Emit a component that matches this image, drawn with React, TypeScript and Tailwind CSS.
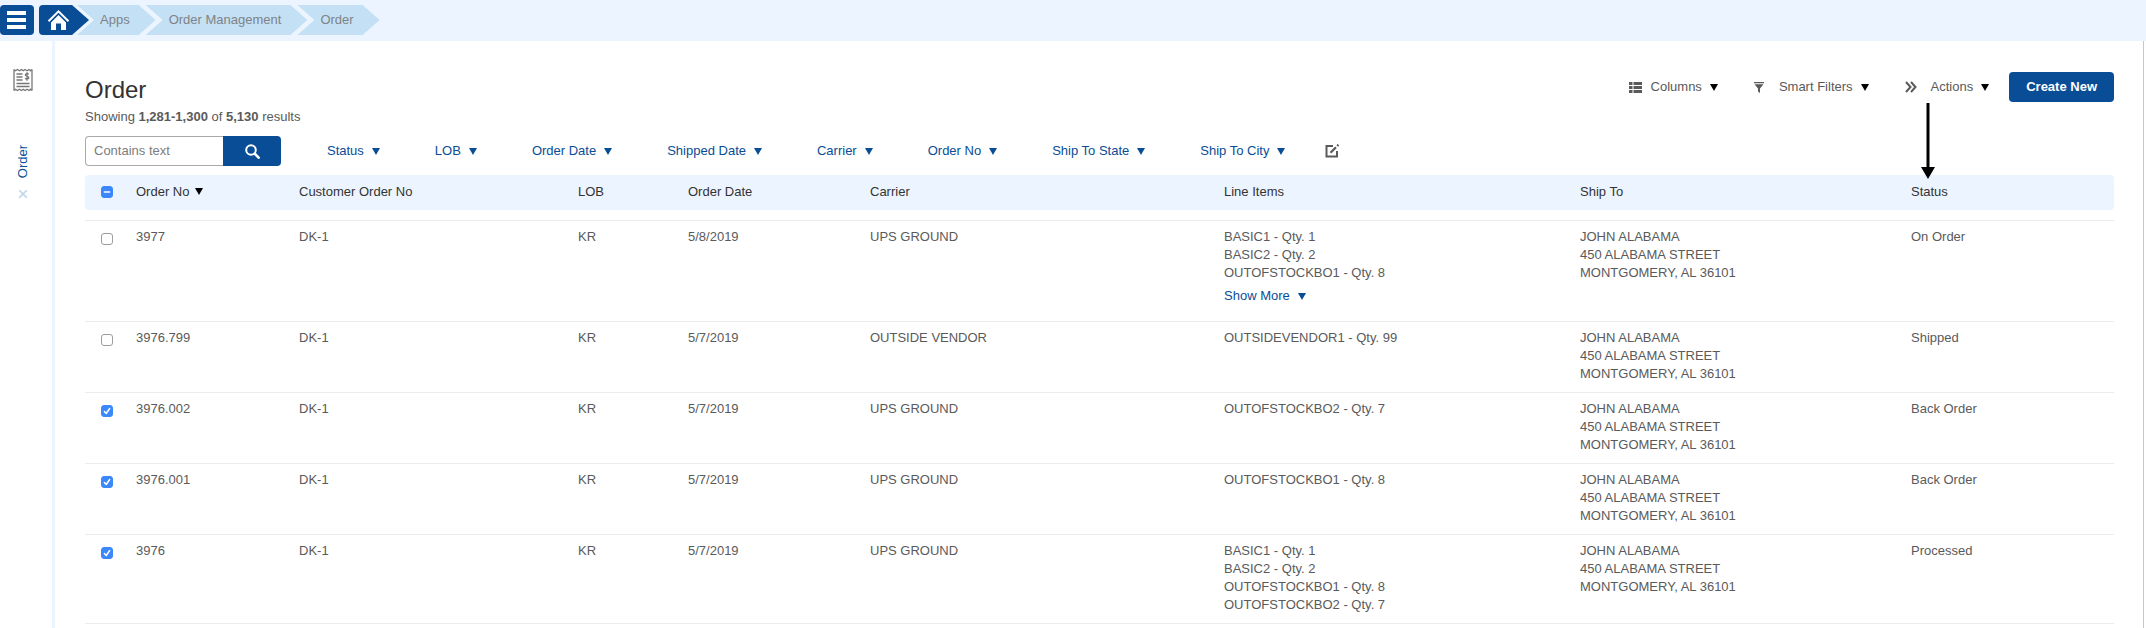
import { useState } from 'react';

const FILTERS = ['Status', 'LOB', 'Order Date', 'Shipped Date', 'Carrier', 'Order No', 'Ship To State', 'Ship To City'];

const ADDRESS = ['JOHN ALABAMA', '450 ALABAMA STREET', 'MONTGOMERY, AL 36101'];

const ORDERS = [
  { no: '3977', date: '5/8/2019', carrier: 'UPS GROUND', items: ['BASIC1 - Qty. 1', 'BASIC2 - Qty. 2', 'OUTOFSTOCKBO1 - Qty. 8'], more: true, status: 'On Order' },
  { no: '3976.799', date: '5/7/2019', carrier: 'OUTSIDE VENDOR', items: ['OUTSIDEVENDOR1 - Qty. 99'], more: false, status: 'Shipped' },
  { no: '3976.002', date: '5/7/2019', carrier: 'UPS GROUND', items: ['OUTOFSTOCKBO2 - Qty. 7'], more: false, status: 'Back Order' },
  { no: '3976.001', date: '5/7/2019', carrier: 'UPS GROUND', items: ['OUTOFSTOCKBO1 - Qty. 8'], more: false, status: 'Back Order' },
  { no: '3976', date: '5/7/2019', carrier: 'UPS GROUND', items: ['BASIC1 - Qty. 1', 'BASIC2 - Qty. 2', 'OUTOFSTOCKBO1 - Qty. 8', 'OUTOFSTOCKBO2 - Qty. 7'], more: false, status: 'Processed' },
];

function Caret() {
  return (
    <svg viewBox="0 0 8 7" className="w-2 h-[7px] shrink-0" fill="currentColor" aria-hidden="true">
      <path d="M0 0h8L4 7z" />
    </svg>
  );
}

function Crumb({ label }: { label: string }) {
  return (
    <a
      href="#"
      className="flex items-center h-[30px] pl-[23px] pr-[26px] bg-[#c4e0f4] [clip-path:polygon(0_0,calc(100%_-_17px)_0,100%_50%,calc(100%_-_17px)_100%,0_100%,17px_50%)]"
    >
      {label}
    </a>
  );
}

function Checkbox({ label, checked, mixed, onChange }: { label: string; checked: boolean; mixed?: boolean; onChange: () => void }) {
  return (
    <span className="relative block w-3 h-3">
      <input
        type="checkbox"
        aria-label={label}
        checked={checked}
        onChange={onChange}
        className="block appearance-none w-3 h-3 rounded-[3px] border border-[#9d9d9d] bg-white checked:border-[#3b87fc] checked:bg-[#3b87fc]"
      />
      {checked && (
        <svg viewBox="0 0 12 12" className="absolute inset-0 w-3 h-3 pointer-events-none" fill="none" stroke="#fff" strokeWidth="1.6" strokeLinecap="round" strokeLinejoin="round">
          <path d={mixed ? 'M3.4 6h5.2' : 'M3.4 6.5l1.8 2L8.6 3.6'} />
        </svg>
      )}
    </span>
  );
}

export default function App() {
  const [selected, setSelected] = useState<string[]>(['3976.002', '3976.001', '3976']);

  const toggle = (no: string) =>
    setSelected(selected.includes(no) ? selected.filter(n => n !== no) : [...selected, no]);

  const toggleAll = () => setSelected(selected.length ? [] : ORDERS.map(o => o.no));

  return (
    <div className="flex flex-col min-h-screen bg-white text-[13px] leading-[18px] text-[#5a5a5a] font-['Liberation_Sans',Arial,sans-serif]">
      <header className="flex items-center h-[41px] pb-px bg-[#ecf5ff]">
        <button aria-label="Menu" className="flex items-center justify-center w-[34px] h-[30px] rounded bg-[#084d96] text-white">
          <svg viewBox="0 0 20 18" className="w-5 h-[18px]" fill="currentColor">
            <path d="M0 0h19v4H0zM0 7h19v4H0zM0 14h19v4H0z" />
          </svg>
        </button>
        <nav aria-label="Breadcrumb" className="flex ml-[5px] text-[#7f8387]">
          <a href="#" aria-label="Home" className="block w-[50px] h-[30px]">
            <svg viewBox="0 0 50 30" className="w-[50px] h-[30px]">
              <path d="M4 0h29l17 15-17 15H4a4 4 0 0 1-4-4V4a4 4 0 0 1 4-4z" fill="#084d96" />
              <path d="M9.5 16.2L19.5 6.3l10 9.9" fill="none" stroke="#fff" strokeWidth="2" />
              <path d="M12 17.4l7.5-7.4 7.5 7.4V25h-5v-6.500h-5V25h-5z" fill="#fff" />
            </svg>
          </a>
          <div className="flex -space-x-[10px] -ml-3">
            <Crumb label="Apps" />
            <Crumb label="Order Management" />
            <Crumb label="Order" />
          </div>
        </nav>
      </header>

      <div className="flex flex-1">
        <aside className="flex flex-col items-center w-[55px] shrink-0 pt-[27px] pr-[6px] border-r-[3px] border-[#ecf5ff]">
          <svg viewBox="0 0 20 24" className="w-5 h-6" fill="none" stroke="#777" strokeWidth="1.3">
            <path d="M1 1.500V22.500M19 1.500V22.500" />
            <path d="M1 1.500l1.500 1.300 2-1.300 2 1.300 2-1.300 1.700 1.300 1.800-1.300 2 1.300 2-1.300 1.500 1.300 1.500-1.300M1 22.500l1.500-1.300 2 1.300 2-1.300 2 1.300 1.700-1.300 1.800 1.300 2-1.300 2 1.300 1.500-1.300 1.500 1.300" />
            <path d="M3.500 6h6M3.500 9h6M3.500 12h6M3.500 15.500h13M3.500 18.500h13" strokeWidth="1.500" />
            <path d="M15.800 6.300c-1.800-1.300-4-.2-3.200 1.200.7 1 3 .7 3.200 2 .2 1.500-2.400 2-3.600.8M14 4.300v8.400" />
          </svg>
          <a href="#" className="mt-[53px] [writing-mode:vertical-rl] rotate-180 text-[#084d96]">Order</a>
          <button aria-label="Close Order" className="mt-3 text-[#c2d8ea]">
            <svg viewBox="0 0 8 8" className="w-2 h-2" fill="none" stroke="currentColor" strokeWidth="1.6">
              <path d="M0 0l8 8M8 0L0 8" />
            </svg>
          </button>
        </aside>

        <main className="flex-1 min-w-0 mr-[2px] pt-[31px] pl-[30px] pr-[29px] border-r border-[#c8c8c8]">
          <div className="flex items-start justify-between">
            <div>
              <h1 className="pt-[3px] text-2xl leading-[30px] text-[#333]">Order</h1>
              <p className="mt-[3px]">
                Showing <b>1,281-1,300</b> of <b>5,130</b> results
              </p>
            </div>
            <div className="flex items-center">
              <button className="flex items-center">
                <svg viewBox="0 0 13 11" className="w-[13px] h-[11px] mr-[9px]" fill="currentColor">
                  <path d="M0 0h3.500v3H0zM4.500 0H13v3H4.500zM0 4h3.500v3H0zM4.500 4H13v3H4.500zM0 8h3.500v3H0zM4.500 8H13v3H4.500z" />
                </svg>
                Columns
                <span className="ml-2 text-black"><Caret /></span>
              </button>
              <button className="flex items-center ml-9">
                <svg viewBox="0 0 10 11" className="w-[10px] h-[11px] mr-[15px]" fill="currentColor">
                  <path d="M0 0h10v1.300H0zM.5 2.300h9L6 6.500V11L4 9.500v-3z" />
                </svg>
                Smart Filters
                <span className="ml-2 text-black"><Caret /></span>
              </button>
              <button className="relative flex items-center ml-9">
                <svg viewBox="0 0 12 12" className="w-3 h-3 mr-[14px]" fill="none" stroke="currentColor" strokeWidth="2">
                  <path d="M1 1l4.500 5L1 11M6 1l4.500 5L6 11" />
                </svg>
                Actions
                <span className="ml-2 text-black"><Caret /></span>
                {/* arrow pointing down at the Status column */}
                <svg viewBox="0 0 14 76" className="absolute left-4 top-[25px] w-[14px] h-[76px] text-black pointer-events-none" fill="currentColor">
                  <path d="M5.500 0h3v64H14L7 76 0 64h5.500z" />
                </svg>
              </button>
              <button className="ml-5 h-[30px] px-[17px] rounded bg-[#084d96] text-white font-bold">Create New</button>
            </div>
          </div>

          <div className="flex items-center mt-[10px]">
            <form className="flex h-[30px]" onSubmit={e => e.preventDefault()}>
              <input
                type="text"
                aria-label="Contains text"
                placeholder="Contains text"
                className="w-[138px] px-2 border border-r-0 border-[#aaa] rounded-l placeholder:text-[#7d7d7d] outline-none"
              />
              <button aria-label="Search" className="flex items-center justify-center w-[58px] rounded-r bg-[#084d96] text-white">
                <svg viewBox="0 0 15 15" className="w-[15px] h-[15px]" fill="none" stroke="currentColor" strokeWidth="2">
                  <circle cx="6" cy="6" r="4.800" />
                  <path d="M9.500 9.500l5 5" strokeWidth="2.600" />
                </svg>
              </button>
            </form>
            <div className="flex items-center gap-[55px] ml-[46px] text-[#084d96]">
              {FILTERS.map(f => (
                <button key={f} className="flex items-center gap-2">
                  {f}
                  <Caret />
                </button>
              ))}
            </div>
            <button aria-label="Edit filters" className="ml-10">
              <svg viewBox="0 0 14 14" className="w-[14px] h-[14px]" fill="none" stroke="currentColor" strokeWidth="2">
                <path d="M8 2H1.500v10.500H12V7" />
                <path d="M5.500 8.800L11 3.200M12.200 2l1.300-1.300" strokeWidth="2.200" />
              </svg>
            </button>
          </div>

          <table className="mt-[9px] w-full table-fixed border-separate border-spacing-0 text-left">
            <colgroup>
              <col className="w-[51px]" />
              <col className="w-[163px]" />
              <col className="w-[279px]" />
              <col className="w-[110px]" />
              <col className="w-[182px]" />
              <col className="w-[354px]" />
              <col className="w-[356px]" />
              <col className="w-[331px]" />
              <col className="w-[203px]" />
            </colgroup>
            <thead>
              <tr className="h-[35px] text-[#333] *:bg-[#ecf5ff] *:pb-[2px] *:font-normal">
                <th className="pl-4 rounded-l">
                  <Checkbox label="Select all orders" checked={selected.length > 0} mixed={selected.length < ORDERS.length} onChange={toggleAll} />
                </th>
                <th aria-sort="descending">
                  <button className="flex items-center gap-[6px]">
                    Order No
                    <span className="text-black"><Caret /></span>
                  </button>
                </th>
                <th>Customer Order No</th>
                <th>LOB</th>
                <th>Order Date</th>
                <th>Carrier</th>
                <th>Line Items</th>
                <th>Ship To</th>
                <th className="rounded-r">Status</th>
              </tr>
            </thead>
            <tbody className="before:block before:h-[10px]">
              {ORDERS.map(o => (
                <tr key={o.no} className="align-top *:border-t *:border-[#ececec] *:pt-[7px] *:pb-[9px] last:*:border-b">
                  <td className="pl-4">
                    <div className="pt-[5px]">
                      <Checkbox label={`Select order ${o.no}`} checked={selected.includes(o.no)} onChange={() => toggle(o.no)} />
                    </div>
                  </td>
                  <td>{o.no}</td>
                  <td>DK-1</td>
                  <td>KR</td>
                  <td>{o.date}</td>
                  <td>{o.carrier}</td>
                  <td>
                    {o.items.map(item => <div key={item}>{item}</div>)}
                    {o.more && (
                      <button className="flex items-center gap-2 mt-[5px] mb-[7px] text-[#084d96]">
                        Show More
                        <Caret />
                      </button>
                    )}
                  </td>
                  <td>{ADDRESS.map(line => <div key={line}>{line}</div>)}</td>
                  <td>{o.status}</td>
                </tr>
              ))}
            </tbody>
          </table>
        </main>
      </div>
    </div>
  );
}
